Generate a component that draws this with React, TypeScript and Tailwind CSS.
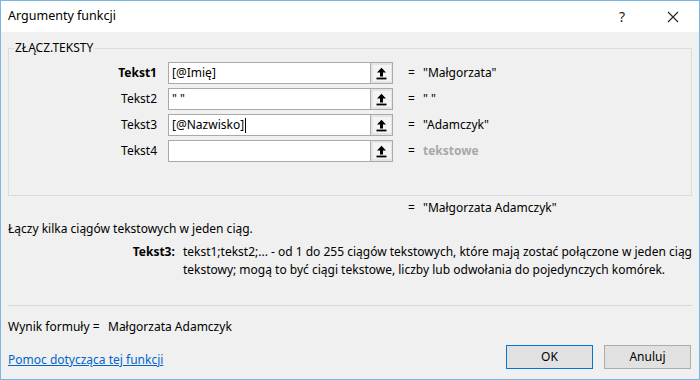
import React from "react";

const font = { fontFamily: '"Noto Sans", "Open Sans", sans-serif' };

function RefIcon() {
  return (
    <svg width="11" height="13" viewBox="0 0 11 13">
      <path d="M5.5 0.8 L10 5.6 L7 5.6 L7 9.4 L4 9.4 L4 5.6 L1 5.6 Z" fill="#000" />
      <rect x="0.5" y="10.6" width="10" height="1.8" fill="#000" />
    </svg>
  );
}

function Row({
  label,
  bold,
  value,
  result,
  resultGray,
  cursor,
}: {
  label: string;
  bold?: boolean;
  value: string;
  result: string;
  resultGray?: boolean;
  cursor?: boolean;
}) {
  return (
    <div className="flex items-center h-[22px]">
      <div
        className={`w-[148px] text-right text-[12px] text-black ${bold ? "font-bold" : ""}`}
      >
        {label}
      </div>
      <div className="ml-[11px] flex h-[22px] w-[225px] border border-[#a9a9a9] bg-white">
        <div className="flex-1 flex items-center pl-[3px] text-[12px] text-black whitespace-pre">
          {value}
          {cursor && <span className="inline-block w-[1px] h-[15px] bg-black ml-[1px]" />}
        </div>
        <div className="w-[22px] h-full border-l border-[#adadad] bg-[#e5e5e5] flex items-center justify-center">
          <div className="w-[18px] h-[16px] bg-[#f4f4f4] flex items-center justify-center">
            <RefIcon />
          </div>
        </div>
      </div>
      <div className="ml-[15px] w-[15px] text-[12px] text-black">=</div>
      <div
        className={`text-[12px] whitespace-pre ${resultGray ? "font-bold text-[#a8a8a8]" : "text-black"}`}
      >
        {result}
      </div>
    </div>
  );
}

export default function App() {
  return (
    <div
      style={font}
      className="w-[700px] h-[380px] border border-[#7ab6e2] bg-[#f0f0f0] flex flex-col overflow-hidden text-[12px] text-black"
    >
      {/* Title bar */}
      <div className="h-[31px] bg-white flex items-center pl-[7px] pr-[14px]">
        <div className="text-[12.5px] text-black flex-1">Argumenty funkcji</div>
        <div className="text-[14px] text-[#222] mr-[42px]">?</div>
        <svg width="12" height="12" viewBox="0 0 12 12" className="mr-[6px]">
          <path d="M1 1 L11 11 M11 1 L1 11" stroke="#222" strokeWidth="1.1" />
        </svg>
      </div>

      <div className="px-[7px] flex flex-col">
        {/* Group box */}
        <div className="relative mt-[16px] h-[148px] border border-[#dcdcdc]">
          <div className="absolute left-[5px] top-[-9px] bg-[#f0f0f0] px-[1px] text-[12px] leading-[16px]">
            ZŁĄCZ.TEKSTY
          </div>
          <div className="pt-[13px] flex flex-col gap-[4px]">
            <Row label="Tekst1" bold value="[@Imię]" result={'"Małgorzata"'} />
            <Row label="Tekst2" value={'" "'} result={'" "'} />
            <Row label="Tekst3" value="[@Nazwisko]" cursor result={'"Adamczyk"'} />
            <Row label="Tekst4" value="" result="tekstowe" resultGray />
          </div>
        </div>

        {/* Overall result */}
        <div className="flex h-[18px] mt-[3px] items-center">
          <div className="ml-[400px] w-[15px]">=</div>
          <div className="whitespace-pre">"Małgorzata Adamczyk"</div>
        </div>

        <div className="mt-[3px] h-[18px] flex items-center">
          Łączy kilka ciągów tekstowych w jeden ciąg.
        </div>

        <div className="mt-[5px] flex leading-[18px]">
          <div className="w-[237px] text-right font-bold pr-[8px]">Tekst3:</div>
          <div className="whitespace-nowrap">
            tekst1;tekst2;... - od 1 do 255 ciągów tekstowych, które mają zostać połączone w jeden ciąg
            <br />
            tekstowy; mogą to być ciągi tekstowe, liczby lub odwołania do pojedynczych komórek.
          </div>
        </div>

        <div className="mt-[26px] h-[1px] bg-[#d8d8d8]" />

        <div className="mt-[12px] h-[18px] flex items-center">
          <span className="w-[100px] shrink-0">Wynik formuły =</span>
          <span>Małgorzata Adamczyk</span>
        </div>

        <div className="mt-[9px] flex items-center">
          <a className="text-[#0066cc] underline flex-1 mt-[6px]" href="#">
            Pomoc dotycząca tej funkcji
          </a>
          <button className="w-[87px] h-[24px] border border-[#0078d7] bg-[#e1e1e1] text-[12px]">
            OK
          </button>
          <button className="ml-[11px] w-[87px] h-[24px] border border-[#adadad] bg-[#e1e1e1] text-[12px] mr-[1px]">
            Anuluj
          </button>
        </div>
      </div>
    </div>
  );
}
